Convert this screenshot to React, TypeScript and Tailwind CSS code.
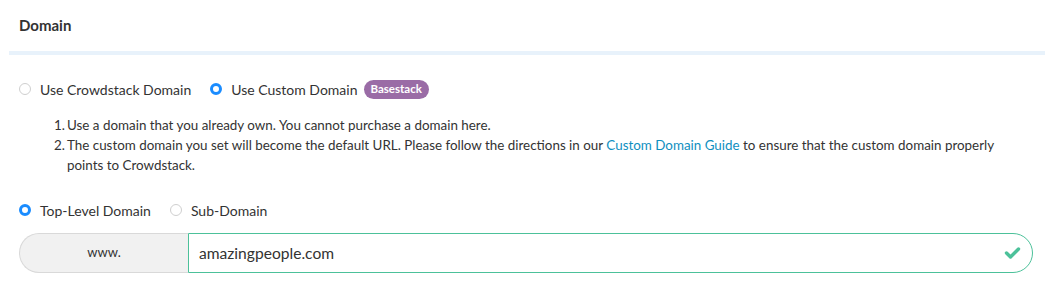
import React, { useState } from "react";

function Radio({ checked }: { checked: boolean }) {
  return checked ? (
    <span className="inline-block h-[12px] w-[12px] shrink-0 rounded-full border-[3.5px] border-[#1a8cff] bg-white" />
  ) : (
    <span className="inline-block h-[12px] w-[12px] shrink-0 rounded-full border border-[#cfcfcf] bg-white" />
  );
}

export default function App() {
  const [source, setSource] = useState<"crowdstack" | "custom">("custom");
  const [level, setLevel] = useState<"top" | "sub">("top");
  const [domain, setDomain] = useState("amazingpeople.com");

  return (
    <div className="h-[300px] w-[1054px] bg-white font-['Lato','Open_Sans',sans-serif] text-[#333]">
      <div className="flex h-[51px] items-center pl-[19px] pb-[1px] text-[15px] font-bold text-[#333]">
        Domain
      </div>
      <div className="mx-[9px] h-[4px] bg-[#e8f2fb]" />

      <div className="px-[19px]">
        <div className="mt-[24px] flex h-[20px] items-center text-[14px]">
          <label
            className="flex cursor-pointer items-center gap-[9px]"
            onClick={() => setSource("crowdstack")}
          >
            <Radio checked={source === "crowdstack"} />
            <span>Use Crowdstack Domain</span>
          </label>
          <label
            className="ml-[19px] flex cursor-pointer items-center gap-[9px]"
            onClick={() => setSource("custom")}
          >
            <Radio checked={source === "custom"} />
            <span>Use Custom Domain</span>
          </label>
          <span className="ml-[6px] flex h-[19px] items-center rounded-full bg-[#9a6ca6] px-[7px] text-[11.5px] font-bold text-white">
            Basestack
          </span>
        </div>

        <ol className="mt-[16px] pl-[35px] text-[13.4px] leading-[20px] text-[#333]">
          <li className="flex">
            <span className="w-[13px] shrink-0">1.</span>
            <span>Use a domain that you already own. You cannot purchase a domain here.</span>
          </li>
          <li className="flex">
            <span className="w-[13px] shrink-0">2.</span>
            <p className="pr-[30px]">
              The custom domain you set will become the default URL. Please follow the directions in our{" "}
              <a href="#" className="text-[#0f8fbf]">Custom Domain Guide</a> to ensure that the custom domain properly points to Crowdstack.
            </p>
          </li>
        </ol>

        <div className="mt-[25px] flex h-[20px] items-center text-[14px]">
          <label className="flex cursor-pointer items-center gap-[9px]" onClick={() => setLevel("top")}>
            <Radio checked={level === "top"} />
            <span>Top-Level Domain</span>
          </label>
          <label className="ml-[19px] flex cursor-pointer items-center gap-[9px]" onClick={() => setLevel("sub")}>
            <Radio checked={level === "sub"} />
            <span>Sub-Domain</span>
          </label>
        </div>

        <div className="mt-[13px] mr-[2px] flex h-[40px]">
          <div className="flex w-[169px] shrink-0 items-center justify-center rounded-l-full border border-r-0 border-[#d9d9d9] bg-[#f1f1f1] text-[13px] text-[#333]">
            www.
          </div>
          <div className="flex flex-1 items-center rounded-r-full border border-[#4cc19a] pr-[11px]">
            <input
              value={domain}
              onChange={(e) => setDomain(e.target.value)}
              className="h-full flex-1 bg-transparent pl-[10px] text-[15.6px] text-[#333] outline-none"
            />
            <svg width="17" height="14" viewBox="0 0 17 14" className="shrink-0">
              <path d="M2.5 7 L6.5 11 L14.5 3" fill="none" stroke="#4cc19a" strokeWidth="3.4" strokeLinecap="round" strokeLinejoin="round" />
            </svg>
          </div>
        </div>
      </div>
    </div>
  );
}
